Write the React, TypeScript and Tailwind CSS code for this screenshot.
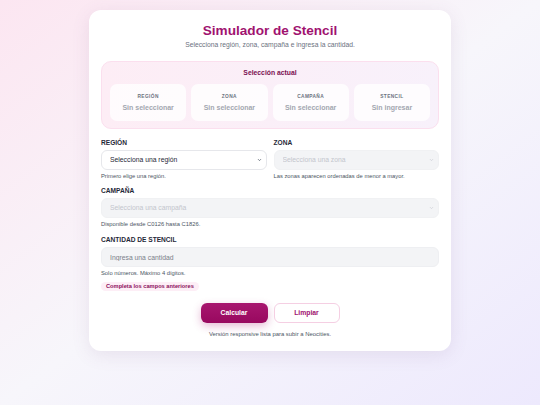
import { ChevronDown } from "lucide-react";

const resumen = [
  { label: "REGIÓN", value: "Sin seleccionar" },
  { label: "ZONA", value: "Sin seleccionar" },
  { label: "CAMPAÑA", value: "Sin seleccionar" },
  { label: "STENCIL", value: "Sin ingresar" },
];

function Select({ placeholder, disabled }: { placeholder: string; disabled?: boolean }) {
  return (
    <div className="relative mt-[3px]">
      <select
        disabled={disabled}
        defaultValue=""
        className={
          "block w-full h-[20px] appearance-none rounded-[6px] border pl-[8px] pr-[14px] text-[6.8px] leading-[18px] outline-none " +
          (disabled
            ? "bg-[#f3f4f6] border-[#f0f1f3] text-[#c3c6cd]"
            : "bg-white border-[#e6e7eb] text-[#1f2937]")
        }
      >
        <option value="">{placeholder}</option>
      </select>
      <ChevronDown
        strokeWidth={3}
        className={
          "pointer-events-none absolute right-[5px] top-1/2 -translate-y-1/2 w-[5px] h-[5px] " +
          (disabled ? "text-[#c9ccd2]" : "text-[#374151]")
        }
      />
    </div>
  );
}

export default function App() {
  return (
    <main className="min-h-[405px] w-full bg-gradient-to-br from-[#fce6f1] via-[#f7f6fb] to-[#ede9fd] pt-[10px] pb-[54px] font-['Liberation_Sans',Arial,sans-serif]">
      <div className="mx-auto w-[362px] rounded-[12px] bg-white px-[12px] pt-[13px] pb-[13px] shadow-[0_4px_18px_rgba(120,80,130,0.12)]">
        {/* Header */}
        <h1 className="text-center text-[13.6px] leading-[16px] font-bold text-[#a0126f]">Simulador de Stencil</h1>
        <p className="mt-[2px] text-center text-[6.75px] leading-[8px] text-[#6b7280]">
          Selecciona región, zona, campaña e ingresa la cantidad.
        </p>

        {/* Resumen */}
        <section className="mt-[12px] rounded-[10px] border border-[#fbdfee] bg-gradient-to-r from-[#fdedf5] to-[#f8f1fb] px-[8px] pt-[7px] pb-[7px]">
          <div className="text-center text-[6.8px] leading-[8px] font-bold text-[#7a0f52]">Selección actual</div>
          <div className="mt-[7px] grid grid-cols-4 gap-[5px]">
            {resumen.map((r) => (
              <div key={r.label} className="flex h-[37px] flex-col items-center justify-center rounded-[7px] bg-white/80">
                <div className="text-[4.8px] leading-[6px] font-bold tracking-[0.08em] text-[#6b7280]">{r.label}</div>
                <div className="mt-[3px] text-[7px] leading-[9px] font-bold text-[#a3a7b0]">{r.value}</div>
              </div>
            ))}
          </div>
        </section>

        {/* Formulario */}
        <div className="mt-[10px] grid grid-cols-2 gap-x-[7px]">
          <div>
            <label className="block text-[6.6px] leading-[8px] font-bold text-[#1f2937]">REGIÓN</label>
            <Select placeholder="Selecciona una región" />
            <p className="mt-[3px] text-[5.8px] leading-[7px] text-[#4b5563]">Primero elige una región.</p>
          </div>
          <div>
            <label className="block text-[6.6px] leading-[8px] font-bold text-[#1f2937]">ZONA</label>
            <Select placeholder="Selecciona una zona" disabled />
            <p className="mt-[3px] text-[5.8px] leading-[7px] text-[#4b5563]">Las zonas aparecen ordenadas de menor a mayor.</p>
          </div>
        </div>

        <div className="mt-[7px]">
          <label className="block text-[6.6px] leading-[8px] font-bold text-[#1f2937]">CAMPAÑA</label>
          <Select placeholder="Selecciona una campaña" disabled />
          <p className="mt-[3px] text-[5.8px] leading-[7px] text-[#4b5563]">Disponible desde C0126 hasta C1826.</p>
        </div>

        <div className="mt-[8px]">
          <label className="block text-[6.6px] leading-[8px] font-bold text-[#1f2937]">CANTIDAD DE STENCIL</label>
          <input
            placeholder="Ingresa una cantidad"
            className="mt-[3px] block h-[20px] w-full rounded-[6px] border border-[#eeeff2] bg-[#f3f4f6] px-[8px] text-[6.8px] text-[#1f2937] outline-none placeholder:text-[#7b808a]"
          />
          <p className="mt-[3px] text-[5.8px] leading-[7px] text-[#4b5563]">Solo números. Máximo 4 dígitos.</p>
        </div>

        <div className="mt-[5px] flex">
          <span className="rounded-full bg-[#fdeef6] px-[5px] py-[1px] text-[5.7px] leading-[7px] font-bold text-[#8c0f5c]">
            Completa los campos anteriores
          </span>
        </div>

        {/* Acciones */}
        <div className="mt-[12px] flex justify-center gap-[6px]">
          <button className="h-[20px] w-[67px] rounded-[6px] bg-gradient-to-b from-[#a8166f] to-[#98085f] text-[6.8px] leading-[18px] font-bold text-white shadow-[0_3px_8px_rgba(168,22,111,0.30)]">
            Calcular
          </button>
          <button className="h-[20px] w-[66px] rounded-[6px] border border-[#f5cfe3] bg-white text-[6.8px] leading-[18px] font-bold text-[#a0126f]">
            Limpiar
          </button>
        </div>
        <p className="mt-[7px] text-center text-[5.9px] leading-[8px] text-[#4b5563]">
          Versión responsive lista para subir a Neocities.
        </p>
      </div>
    </main>
  );
}
